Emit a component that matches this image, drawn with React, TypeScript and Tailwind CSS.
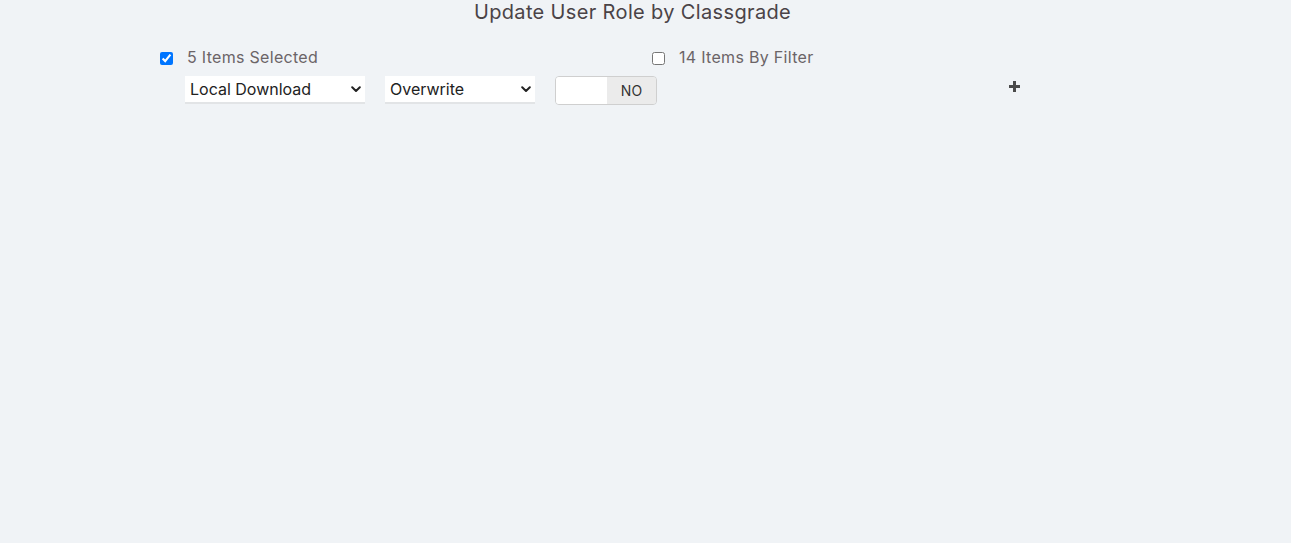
import { useState } from "react";

function Chevron() {
  return (
    <svg width="10" height="7" viewBox="0 0 10 7" className="shrink-0">
      <path d="M1.2 1.3 L5 5 L8.8 1.3" fill="none" stroke="#222" strokeWidth="2" strokeLinecap="round" strokeLinejoin="round" />
    </svg>
  );
}

function FakeSelect({ value, width }: { value: string; width: string }) {
  return (
    <div className={`${width} h-[28px] bg-white border-b-2 border-[#e2e4e6] flex items-center justify-between pl-[5px] pr-[4px] text-[16px] text-[#222]`}>
      <span>{value}</span>
      <Chevron />
    </div>
  );
}

export default function App() {
  const [selected, setSelected] = useState(true);
  const [byFilter, setByFilter] = useState(false);

  return (
    <div className="min-h-[543px] w-full bg-[#f0f3f6] font-['Inter','Open_Sans',sans-serif]">
      <div className="ml-[160px] w-[945px]">
        <h1 className="text-center text-[20px] leading-[24px] text-[#4a4347] tracking-[0.35px]">
          Update User Role by Classgrade
        </h1>

        <div className="mt-[23px] flex items-center h-[20px] text-[16px] text-[#6b6467] tracking-[0.3px]">
          <label className="w-[492px] flex items-center">
            <input
              type="checkbox"
              checked={selected}
              onChange={() => setSelected(!selected)}
              className="w-[13px] h-[13px] m-0 accent-[#0075ff] mt-[3px]"
            />
            <span className="ml-[14px]">5 Items Selected</span>
          </label>
          <label className="flex items-center">
            <input
              type="checkbox"
              checked={byFilter}
              onChange={() => setByFilter(!byFilter)}
              className="w-[13px] h-[13px] m-0 mt-[3px]"
            />
            <span className="ml-[14px]">14 Items By Filter</span>
          </label>
        </div>

        <div className="mt-[9px] ml-[25px] flex items-start">
          <FakeSelect value="Local Download" width="w-[180px]" />
          <div className="ml-[20px]">
            <FakeSelect value="Overwrite" width="w-[150px]" />
          </div>
          <div className="ml-[20px] w-[102px] h-[29px] flex rounded-[4px] border border-[#cfcfcf] overflow-hidden">
            <div className="w-[51px] bg-white" />
            <div className="flex-1 bg-[#ebebeb] flex items-center justify-center text-[14px] text-[#333]">
              NO
            </div>
          </div>
          <div className="ml-[350px] mt-[3px] w-[14px] h-[14px] flex items-center justify-center">
            <svg width="13" height="13" viewBox="0 0 13 13">
              <path d="M6.5 1 V12 M1 6.5 H12" stroke="#4a4a4a" strokeWidth="3" />
            </svg>
          </div>
        </div>
      </div>
    </div>
  );
}
